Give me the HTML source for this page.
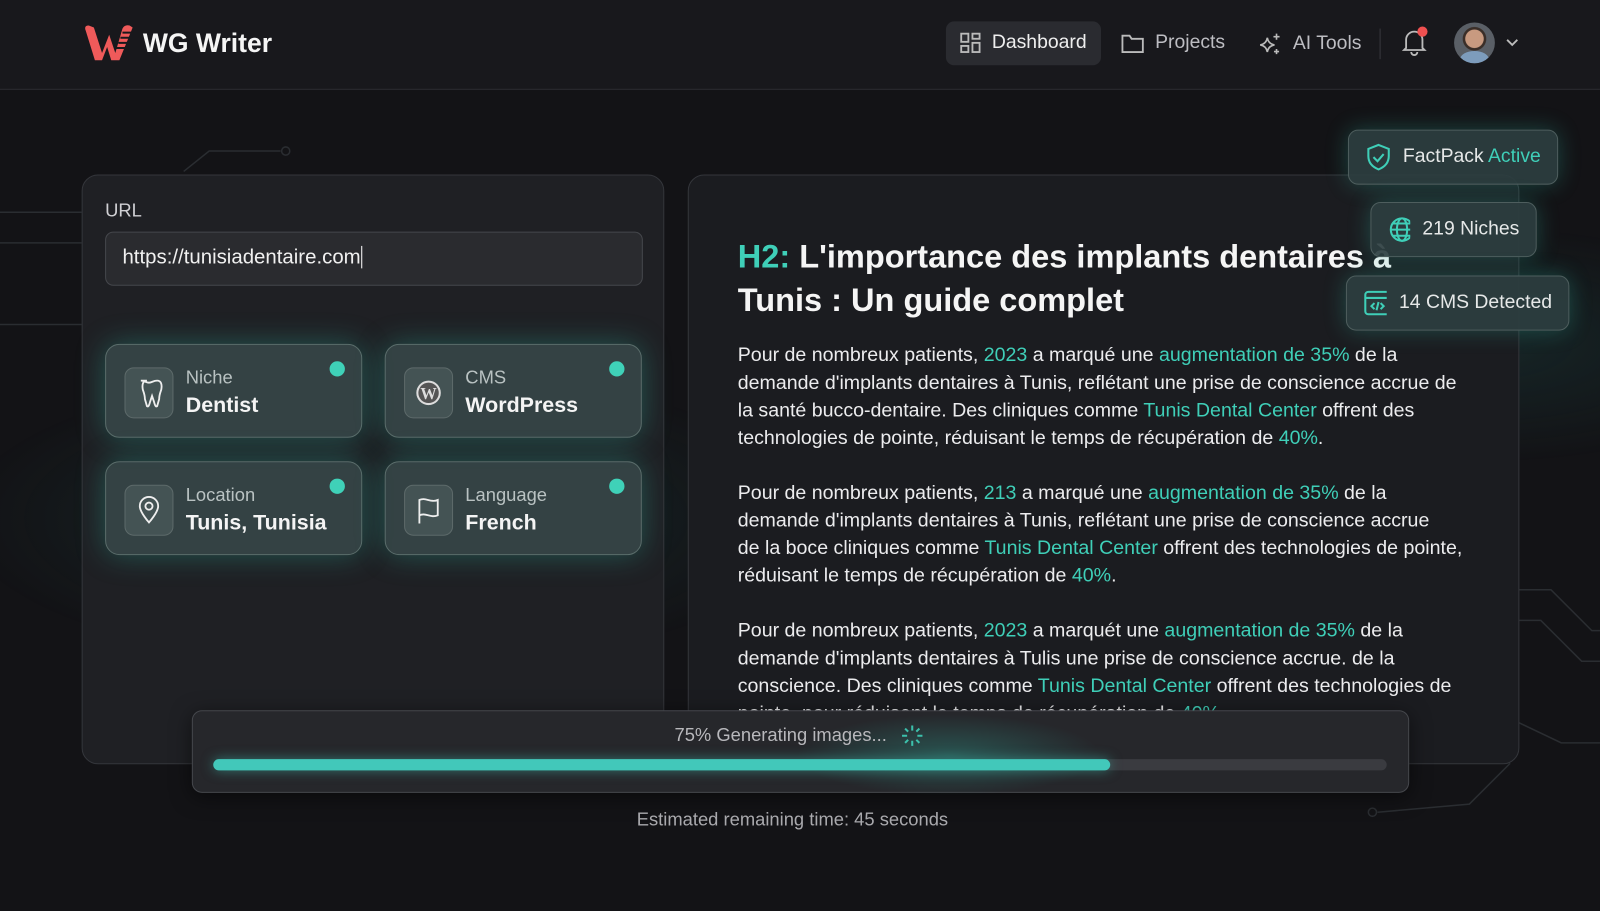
<!DOCTYPE html>
<html><head><meta charset="utf-8"><style>
*{box-sizing:border-box;margin:0;padding:0}
body{width:1600px;height:893px;overflow:hidden;background:#131316;font-family:"Liberation Sans",sans-serif;color:#e8e8ea;position:relative}
#w{position:absolute;left:0;top:0;width:1568px;height:875px;transform:scale(1.0204);transform-origin:0 0}
.hdr{position:absolute;left:0;top:0;width:1568px;height:88px;background:#18181c;border-bottom:1px solid #2c2c31}
.abs{position:absolute}
.nav{font-size:19px;color:#bdbdc2;display:flex;align-items:center;gap:10px;white-space:nowrap}
.panel{position:absolute;border:1px solid #34363b;border-radius:16px;background:#1b1c20}
.card{position:absolute;width:252px;height:92px;border:1px solid #5a6d6b;border-radius:14px;background:rgba(70,95,95,.55);box-shadow:0 0 28px rgba(45,190,170,.35)}
.card .ic{position:absolute;left:18px;top:22px;width:48px;height:50px;border:1px solid #5d6a6a;border-radius:9px;background:rgba(80,95,95,.6);display:flex;align-items:center;justify-content:center}
.card .l{position:absolute;left:78px;top:22px;font-size:18px;color:#b9c2c2}
.card .v{position:absolute;left:78px;top:48px;font-size:21px;font-weight:bold;color:#f4f4f4}
.card .d{position:absolute;right:16px;top:16px;width:15px;height:15px;border-radius:50%;background:#3fd1b8}
.t{color:#3fcfb8}
p.b{font-size:19.2px;line-height:27px;color:#ececee;margin-bottom:27px;white-space:nowrap}
.badge{position:absolute;height:54px;border:1px solid #4e5e5e;border-radius:10px;background:rgba(45,62,64,.92);box-shadow:0 0 22px rgba(50,190,170,.3);display:flex;align-items:center;gap:12px;padding:0 16px;font-size:19px;color:#e6e8e8;white-space:nowrap}
</style></head><body><div id="w">
<div class="abs" style="left:0;top:88px;width:1568px;height:805px;background:radial-gradient(ellipse at 380px 420px,rgba(30,80,78,.35),transparent 420px),radial-gradient(ellipse at 1450px 250px,rgba(30,80,78,.3),transparent 300px)"></div>
<svg class="abs" style="left:0;top:88px" width="1568" height="805"><g stroke="#2a2d31" fill="none" stroke-width="1.5"><path d="M180 80 L205 60 L275 60"/><circle cx="280" cy="60" r="4"/><path d="M0 120 L80 120 M0 150 L80 150 M0 230 L80 230"/><path d="M1488 490 L1520 490 L1560 530 L1600 530 M1488 520 L1510 520 L1550 560 L1600 560 M1488 620 L1530 640 L1600 640 M1480 660 L1440 700 L1350 708"/><circle cx="1345" cy="708" r="4"/></g></svg>
<div class="hdr">
<svg class="abs" style="left:80px;top:22px" width="54" height="40" viewBox="0 0 54 40"><path d="M4 8 Q2 3 7 3 L12 5 L20 30 L27 12 L33 30 L40 6 Q42 2 47 3 L50 5 L37 37 L29 37 L25 24 L20 37 L13 37 Z" fill="#ef5a5a"/><path d="M40 10h12M38 15h12M36 20h12M34 25h12" stroke="#18181c" stroke-width="2"/></svg>
<div class="abs" style="left:140px;top:27px;font-size:26px;font-weight:bold;color:#f5f5f5">WG Writer</div>
<div class="abs" style="left:927px;top:21px;width:152px;height:43px;background:#2a2b30;border-radius:8px"></div>
<div class="abs nav" style="left:940px;top:31px;color:#eee"><svg width="22" height="22" fill="none" stroke="#bbb" stroke-width="1.8"><rect x="2" y="2" width="7" height="8"/><rect x="13" y="2" width="7" height="5"/><rect x="2" y="14" width="7" height="6"/><rect x="13" y="11" width="7" height="9"/></svg>Dashboard</div>
<div class="abs nav" style="left:1098px;top:31px"><svg width="24" height="22" fill="none" stroke="#bbb" stroke-width="1.8"><path d="M2 4h7l2 3h11v13H2z"/></svg>Projects</div>
<div class="abs nav" style="left:1233px;top:31px"><svg width="24" height="24" fill="none" stroke="#bbb" stroke-width="1.6"><path d="M9 6 Q10 12 16 13 Q10 14 9 20 Q8 14 2 13 Q8 12 9 6z"/><path d="M18 2v6M15 5h6M18 17v5M15.5 19.5h5"/></svg>AI Tools</div>
<div class="abs" style="left:1352px;top:28px;width:1px;height:30px;background:#38383d"></div>
<svg class="abs" style="left:1372px;top:26px" width="28" height="30" fill="none" stroke="#bbb" stroke-width="1.8"><path d="M6 21V13a8 8 0 0 1 16 0v8l2 2H4z M11 25a3 3 0 0 0 6 0"/><circle cx="22" cy="5" r="5" fill="#ef5050" stroke="none"/></svg>
<div class="abs" style="left:1425px;top:22px;width:40px;height:40px;border-radius:50%;background:radial-gradient(circle at 50% 40%,#c89a80 0 28%,#3a2e28 30% 36%,#5a5f66 38%);overflow:hidden"><div style="position:absolute;left:6px;top:28px;width:28px;height:16px;border-radius:50%;background:#7d9cbc"></div></div>
<svg class="abs" style="left:1475px;top:37px" width="14" height="10" fill="none" stroke="#bbb" stroke-width="1.8"><path d="M2 2l5 5 5-5"/></svg>
</div>
<div class="panel" style="left:80px;top:171px;width:571px;height:578px;background:#1f2024">
<div class="abs" style="left:22px;top:24px;font-size:18px;color:#d0d0d4">URL</div>
<div class="abs" style="left:22px;top:55px;width:527px;height:53px;border:1px solid #45474c;border-radius:8px;background:#2a2b2f;padding:13px 16px;font-size:20px;color:#f0f0f0">https://tunisiadentaire.com<span style="border-left:1.5px solid #fff;margin-left:1px"></span></div>
</div>
<div class="card" style="left:103px;top:337px"><div class="ic"><svg width="28" height="30" fill="none" stroke="#eee" stroke-width="1.8"><path d="M6 3c4 0 5 2 8 2s4-2 8-2c4 0 5 4 4 9-1 3-2 5-2 9l-2 7c-1 1-2 0-3-4l-2-6-2 6c-1 4-2 5-3 4l-2-7c0-4-1-6-2-9-1-5 0-9 4-9z"/></svg></div><div class="l">Niche</div><div class="v">Dentist</div><div class="d"></div></div>
<div class="card" style="left:377px;top:337px"><div class="ic"><svg width="28" height="28" viewBox="0 0 28 28"><circle cx="14" cy="14" r="12" fill="#ddd"/><circle cx="14" cy="14" r="10" fill="#555"/><text x="14" y="20" font-family="Liberation Serif" font-weight="bold" font-size="16" fill="#ddd" text-anchor="middle">W</text></svg></div><div class="l">CMS</div><div class="v">WordPress</div><div class="d"></div></div>
<div class="card" style="left:103px;top:452px"><div class="ic"><svg width="24" height="28" fill="none" stroke="#eee" stroke-width="1.8"><path d="M12 26S3 16 3 10a9 9 0 0 1 18 0c0 6-9 16-9 16z"/><circle cx="12" cy="10" r="3.5"/></svg></div><div class="l">Location</div><div class="v">Tunis, Tunisia</div><div class="d"></div></div>
<div class="card" style="left:377px;top:452px"><div class="ic"><svg width="26" height="28" fill="none" stroke="#eee" stroke-width="1.8"><path d="M4 27V4c6-3 11 3 18 0v15c-7 3-12-3-18 0"/></svg></div><div class="l">Language</div><div class="v">French</div><div class="d"></div></div>
<div class="panel" style="left:674px;top:171px;width:815px;height:578px;overflow:hidden">
<div class="abs" style="left:48px;top:58px;font-size:31.9px;font-weight:bold;line-height:43px;color:#f5f5f5;width:780px;white-space:nowrap"><span class="t">H2:</span> L'importance des implants dentaires à<br>Tunis : Un guide complet</div>
<div class="abs" style="left:48px;top:163px;width:760px">
<p class="b">Pour de nombreux patients, <span class="t">2023</span> a marqué une <span class="t">augmentation de 35%</span> de la<br>demande d'implants dentaires à Tunis, reflétant une prise de conscience accrue de<br>la santé bucco-dentaire. Des cliniques comme <span class="t">Tunis Dental Center</span> offrent des<br>technologies de pointe, réduisant le temps de récupération de <span class="t">40%</span>.</p>
<p class="b">Pour de nombreux patients, <span class="t">213</span> a marqué une <span class="t">augmentation de 35%</span> de la<br>demande d'implants dentaires à Tunis, reflétant une prise de conscience accrue<br>de la boce cliniques comme <span class="t">Tunis Dental Center</span> offrent des technologies de pointe,<br>réduisant le temps de récupération de <span class="t">40%</span>.</p>
<p class="b">Pour de nombreux patients, <span class="t">2023</span> a marquét une <span class="t">augmentation de 35%</span> de la<br>demande d'implants dentaires à Tulis une prise de conscience accrue. de la<br>conscience. Des cliniques comme <span class="t">Tunis Dental Center</span> offrent des technologies de<br>pointe, pour réduisent le temps de récupération de <span class="t">40%</span>.</p>
</div></div>
<div class="badge" style="left:1321px;top:127px;width:206px"><svg width="26" height="28" fill="none" stroke="#3fcfb8" stroke-width="2"><path d="M13 2l10 4v7c0 7-5 11-10 13C8 24 3 20 3 13V6z"/><path d="M8 14l4 4 6-7"/></svg><span>FactPack <span class="t">Active</span></span></div>
<div class="badge" style="left:1343px;top:198px;width:163px"><svg width="28" height="28" fill="none" stroke="#3fcfb8" stroke-width="2"><circle cx="14" cy="14" r="11"/><ellipse cx="14" cy="14" rx="5" ry="11"/><path d="M3 14h22M5 8h18M5 20h18"/></svg>219 Niches</div>
<div class="badge" style="left:1319px;top:270px;width:219px"><svg width="28" height="26" fill="none" stroke="#3fcfb8" stroke-width="2"><rect x="2" y="2" width="24" height="22" rx="3"/><path d="M2 8h24M11 13l-3 3 3 3M17 13l3 3-3 3M15 12l-2 8"/></svg>14 CMS Detected</div>
<div class="abs" style="left:188px;top:696px;width:1193px;height:81px;border:1px solid #45474c;border-radius:10px;background:#26272b;box-shadow:0 4px 20px rgba(0,0,0,.5)"></div>
<div class="abs" style="left:780px;top:700px;width:300px;height:80px;background:radial-gradient(ellipse,rgba(50,190,170,.3),transparent 70%)"></div>
<div class="abs" style="left:661px;top:710px;font-size:18px;color:#b8b8bc">75% Generating images...</div>
<svg class="abs" style="left:882px;top:709px" width="24" height="24" stroke="#3fcfb8" stroke-width="2"><g opacity=".9"><path d="M12 2v5M12 17v5M2 12h5M17 12h5M5 5l3 3M16 16l3 3M5 19l3-3M16 8l3-3"/></g></svg>
<div class="abs" style="left:209px;top:744px;width:1150px;height:11px;border-radius:6px;background:#3a3b40"></div>
<div class="abs" style="left:209px;top:744px;width:879px;height:11px;border-radius:6px;background:#42c8ba;box-shadow:0 0 12px rgba(66,200,186,.5)"></div>
<div class="abs" style="left:624px;top:793px;font-size:18px;color:#a9a9ad">Estimated remaining time: 45 seconds</div>
</div></body></html>
